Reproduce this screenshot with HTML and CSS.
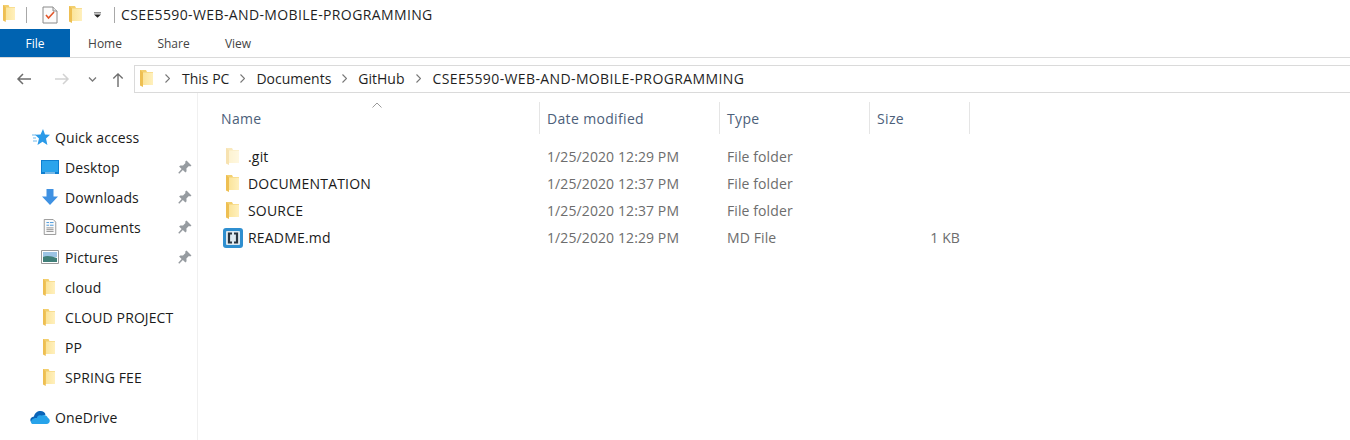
FILE: index.html
```html
<!DOCTYPE html>
<html lang="en">
<head>
<meta charset="utf-8">
<title>CSEE5590-WEB-AND-MOBILE-PROGRAMMING</title>
<link rel="stylesheet" href="styles.css">
</head>
<body>
<svg class="defs" width="0" height="0" aria-hidden="true">
  <defs>
    <linearGradient id="folderBody" x1="0" x2="1" y1="0" y2="0">
      <stop offset="0" stop-color="#fbe49a"/>
      <stop offset="1" stop-color="#fff0bd"/>
    </linearGradient>
    <symbol id="folder" viewBox="0 0 13 17" preserveAspectRatio="none">
      <path d="M0 0h6l1 2h6V15H0z" fill="#f3cf6e"/>
      <path d="M3 2.500h10V15H3z" fill="url(#folderBody)"/>
      <path d="M0 0l3 2.500V17l-3-1.500z" fill="#eebf52"/>
    </symbol>
    <symbol id="pin" viewBox="0 0 14 14">
      <path d="M8.500.500l5 5-1.300.9-1.300-.4-2.500 2.500.2 2.700-1.200 1.200-2.500-2.500L1.200 13.700.3 12.800l3.300-3.700-2.500-2.500 1.200-1.200 2.700.2 2.500-2.500-.4-1.300z" fill="#969ba0"/>
    </symbol>
  </defs>
</svg>

<header class="titlebar">
  <svg class="ico-folder qa-first" aria-hidden="true"><use href="#folder"/></svg>
  <span class="sep sep-a"></span>
  <svg class="ico-check" viewBox="0 0 16 18" aria-hidden="true">
    <path d="M1 1h10l4 4v12H1z" fill="#fbfbfb" stroke="#8a8a8a"/>
    <path d="M11 1v4h4" fill="#e8e8e8" stroke="#8a8a8a"/>
    <path d="M4 9l2.500 3L12 6" fill="none" stroke="#e2562a" stroke-width="1.600"/>
  </svg>
  <svg class="ico-folder qa-third" aria-hidden="true"><use href="#folder"/></svg>
  <svg class="ico-drop" viewBox="0 0 8 6" aria-hidden="true">
    <path d="M0 0h8v1H0zM0 2.500h8L4 6z" fill="#222"/>
  </svg>
  <span class="sep sep-b"></span>
  <span class="title">CSEE5590-WEB-AND-MOBILE-PROGRAMMING</span>
</header>

<nav class="tabs">
  <span class="tab tab-file">File</span>
  <span class="tab tab-home">Home</span>
  <span class="tab tab-share">Share</span>
  <span class="tab tab-view">View</span>
</nav>

<section class="addressrow">
  <svg class="nav-arrow nav-back" viewBox="0 0 16 12" aria-hidden="true"><path d="M15 6H2M7 1L2 6l5 5" fill="none" stroke="#6d6d6d" stroke-width="1.500"/></svg>
  <svg class="nav-arrow nav-fwd" viewBox="0 0 16 12" aria-hidden="true"><path d="M1 6h13M9 1l5 5-5 5" fill="none" stroke="#d2d2d2" stroke-width="1.500"/></svg>
  <svg class="nav-down" viewBox="0 0 8 5" aria-hidden="true"><path d="M.5.500L4 4 7.500.500" fill="none" stroke="#7a7a7a" stroke-width="1.300"/></svg>
  <svg class="nav-up" viewBox="0 0 12 16" aria-hidden="true"><path d="M6 16V2M1 7l5-5 5 5" fill="none" stroke="#6d6d6d" stroke-width="1.500"/></svg>
  <div class="addressbar">
    <svg class="ico-folder addr-folder" aria-hidden="true"><use href="#folder"/></svg>
    <svg class="crumb-sep crumb-first" viewBox="0 0 5 9" aria-hidden="true"><path d="M.5.500l4 4-4 4" fill="none" stroke="#777" stroke-width="1.100"/></svg>
    <span class="crumb">This PC</span>
    <svg class="crumb-sep" viewBox="0 0 5 9" aria-hidden="true"><path d="M.5.500l4 4-4 4" fill="none" stroke="#777" stroke-width="1.100"/></svg>
    <span class="crumb">Documents</span>
    <svg class="crumb-sep" viewBox="0 0 5 9" aria-hidden="true"><path d="M.5.500l4 4-4 4" fill="none" stroke="#777" stroke-width="1.100"/></svg>
    <span class="crumb">GitHub</span>
    <svg class="crumb-sep crumb-last" viewBox="0 0 5 9" aria-hidden="true"><path d="M.5.500l4 4-4 4" fill="none" stroke="#777" stroke-width="1.100"/></svg>
    <span class="crumb crumb-long">CSEE5590-WEB-AND-MOBILE-PROGRAMMING</span>
  </div>
</section>

<div class="explorer">
  <aside class="sidebar">
    <div class="side-row top">
      <svg class="side-ico star" viewBox="0 0 18 17" aria-hidden="true">
        <path d="M11 0l2 5.500 5 .300-4 3.700 1.400 6.500-4.900-3.300-5 3.300 1.500-6.500-4-3.700 5.500-.300z" fill="#2a9ae8"/>
        <path d="M0 6h4M1 9h3M1 12h4" stroke="#6fb9ec" stroke-width="1"/>
      </svg>
      <span>Quick access</span>
    </div>
    <div class="side-row sub">
      <svg class="side-ico wide" viewBox="0 0 18 14" aria-hidden="true">
        <path d="M0 0h18v14H0z" fill="#0f7fd0"/><path d="M1 1h16v11H1z" fill="#2ba4ec"/><path d="M4 12.500h10v1H4z" fill="#dff1fc"/>
      </svg>
      <span class="side-label">Desktop</span>
      <svg class="pin" aria-hidden="true"><use href="#pin"/></svg>
    </div>
    <div class="side-row sub">
      <svg class="side-ico wide" viewBox="0 0 18 16" aria-hidden="true">
        <path d="M5.500 0h7v7.500H17L9 16 1 7.500h4.500z" fill="#3f91e2"/>
      </svg>
      <span class="side-label">Downloads</span>
      <svg class="pin" aria-hidden="true"><use href="#pin"/></svg>
    </div>
    <div class="side-row sub">
      <svg class="side-ico wide" viewBox="0 0 18 18" aria-hidden="true">
        <path d="M2.500.500h10l3 3v14h-13z" fill="#fafafa" stroke="#8d8d8d"/>
        <path d="M5 4h3M5 7h3M9 4h4M9 7h4" stroke="#3a8fd8"/>
        <path d="M5 10h8M5 12h8M5 14h8" stroke="#8a8a8a"/>
      </svg>
      <span class="side-label">Documents</span>
      <svg class="pin" aria-hidden="true"><use href="#pin"/></svg>
    </div>
    <div class="side-row sub">
      <svg class="side-ico wide" viewBox="0 0 18 14" aria-hidden="true">
        <path d="M.5.500h17v13H.5z" fill="#fff" stroke="#9a9a9a"/>
        <path d="M2 2h14v5H2z" fill="#9cc4e4"/>
        <path d="M2 7c4-2 8-1 14 1v4H2z" fill="#3f7f78"/>
      </svg>
      <span class="side-label">Pictures</span>
      <svg class="pin" aria-hidden="true"><use href="#pin"/></svg>
    </div>
    <div class="side-row sub">
      <svg class="ico-folder side-folder" aria-hidden="true"><use href="#folder"/></svg>
      <span class="side-label">cloud</span>
    </div>
    <div class="side-row sub">
      <svg class="ico-folder side-folder" aria-hidden="true"><use href="#folder"/></svg>
      <span class="side-label">CLOUD PROJECT</span>
    </div>
    <div class="side-row sub">
      <svg class="ico-folder side-folder" aria-hidden="true"><use href="#folder"/></svg>
      <span class="side-label">PP</span>
    </div>
    <div class="side-row sub">
      <svg class="ico-folder side-folder" aria-hidden="true"><use href="#folder"/></svg>
      <span class="side-label">SPRING FEE</span>
    </div>
    <div class="side-row top onedrive">
      <svg class="side-ico cloud" viewBox="0 0 20 13" aria-hidden="true">
        <path d="M4 5.500C4.500 2 7.500 0 10.500 0c2.500 0 4.500 1.500 5 3.500L10 8 1 11C-.500 9 .500 6 4 5.500z" fill="#0a64b8"/>
        <path d="M3 13h13.500c3.500 0 4.500-4.500 1.500-6-1-2.500-4-4-6.500-2.500C9 3.500 7 5 7 7 3 6.500.500 9.500 1 11.500c.500 1 1 1.500 2 1.500z" fill="#27a3ea"/>
      </svg>
      <span>OneDrive</span>
    </div>
  </aside>

  <main class="files">
    <svg class="sort-caret" viewBox="0 0 10 6" aria-hidden="true"><path d="M.5 5.500L5 1l4.500 4.500" fill="none" stroke="#9a9a9a"/></svg>
    <div class="file-grid head">
      <span class="col col-name">Name</span>
      <span class="col col-rule">Date modified</span>
      <span class="col col-rule">Type</span>
      <span class="col col-rule">Size</span>
      <span class="col-end"></span>
    </div>
    <div class="file-grid row">
      <span class="cell-name"><svg class="ico-folder file-folder git" aria-hidden="true"><use href="#folder"/></svg><span>.git</span></span>
      <span class="cell">1/25/2020 12:29 PM</span>
      <span class="cell">File folder</span>
      <span class="cell"></span>
    </div>
    <div class="file-grid row">
      <span class="cell-name"><svg class="ico-folder file-folder" aria-hidden="true"><use href="#folder"/></svg><span>DOCUMENTATION</span></span>
      <span class="cell">1/25/2020 12:37 PM</span>
      <span class="cell">File folder</span>
      <span class="cell"></span>
    </div>
    <div class="file-grid row">
      <span class="cell-name"><svg class="ico-folder file-folder" aria-hidden="true"><use href="#folder"/></svg><span>SOURCE</span></span>
      <span class="cell">1/25/2020 12:37 PM</span>
      <span class="cell">File folder</span>
      <span class="cell"></span>
    </div>
    <div class="file-grid row">
      <span class="cell-name"><svg class="md-ico" viewBox="0 0 20 20" aria-hidden="true">
        <rect width="20" height="20" rx="3" fill="#2f8fd0"/>
        <rect x="3" y="3" width="14" height="14" rx="1" fill="#dfe9f0"/>
        <path d="M9 5.500H6v9h3M11 5.500h3v9h-3" fill="none" stroke="#2a3540" stroke-width="2.200"/>
      </svg><span>README.md</span></span>
      <span class="cell">1/25/2020 12:29 PM</span>
      <span class="cell">MD File</span>
      <span class="cell cell-size">1 KB</span>
    </div>
  </main>
</div>
</body>
</html>
```

FILE: styles.css
```css
* { box-sizing: border-box; }

html, body {
  margin: 0;
  padding: 0;
  width: 1350px;
  height: 440px;
  overflow: hidden;
  background: #fff;
}

body {
  font-family: "Open Sans", "Noto Sans", "Liberation Sans", sans-serif;
  font-size: 14px;
  color: #1a1a1a;
}

.defs { display: block; height: 0; }

.ico-folder { display: block; width: 13px; height: 17px; flex: none; }

/* title bar */
.titlebar {
  height: 29px;
  display: flex;
  align-items: center;
}
.qa-first { margin-left: 3px; width: 12px; margin-top: -2px; }
.sep { width: 1px; height: 16px; background: #a8a8a8; flex: none; }
.sep-a { margin-left: 11px; }
.ico-check { width: 16px; height: 18px; margin-left: 15px; flex: none; }
.qa-third { margin-left: 11px; }
.ico-drop { width: 7px; height: 6px; margin-left: 12px; flex: none; }
.sep-b { margin-left: 13px; }
.title { margin-left: 6px; font-size: 14px; letter-spacing: 0.38px; color: #1f1f1f; white-space: nowrap; }

/* ribbon tabs */
.tabs {
  height: 29px;
  display: flex;
  border-bottom: 1px solid #dadada;
}
.tab { height: 28px; line-height: 30px; font-size: 12px; color: #444; text-align: center; }
.tab-file { width: 70px; background: #0063b1; color: #fff; }
.tab-home { width: 70px; }
.tab-share { width: 35px; margin-left: 16px; }
.tab-view { width: 30px; margin-left: 32px; }

/* address row */
.addressrow {
  height: 28px;
  margin-top: 7px;
  display: flex;
  align-items: center;
}
.nav-arrow { width: 16px; height: 12px; flex: none; }
.nav-back { margin-left: 16px; }
.nav-fwd { margin-left: 22px; }
.nav-down { width: 9px; height: 5px; margin-left: 18px; flex: none; }
.nav-up { width: 12px; height: 15px; margin-left: 15px; flex: none; }
.addressbar {
  margin-left: 10px;
  flex: 1;
  height: 28px;
  display: flex;
  align-items: center;
  padding-bottom: 1px;
  border: 1px solid #dadada;
  border-right: none;
}
.addr-folder { margin-left: 5px; }
.crumb-sep { width: 5px; height: 9px; flex: none; margin: 0 11px; }
.crumb-first { margin-left: 12px; margin-right: 12px; }
.crumb-last { margin-right: 12px; }
.crumb { font-size: 14px; color: #1f1f1f; white-space: nowrap; }
.crumb-long { letter-spacing: 0.38px; }

/* body */
.explorer { display: flex; height: 347px; }

.sidebar {
  width: 198px;
  flex: none;
  padding-top: 29px;
  border-right: 1px solid #f0f0f0;
}
.side-row {
  height: 30px;
  display: flex;
  align-items: center;
  font-size: 14px;
  letter-spacing: 0.1px;
  color: #1a1a1a;
}
.side-row.top { padding-left: 32px; }
.side-row.sub { padding-left: 41px; }
.side-row.onedrive { margin-top: 10px; padding-left: 30px; }
.side-ico { flex: none; display: block; }
.star { width: 18px; height: 17px; margin-right: 5px; }
.cloud { width: 20px; height: 13px; margin-right: 5px; }
.wide { width: 18px; height: 16px; margin-right: 6px; }
.side-folder { margin: 0 10px 0 2px; width: 12px; }
.side-label { flex: 1; }
.pin { width: 14px; height: 14px; flex: none; margin-right: 5px; }

/* file list */
.files { position: relative; flex: 1; padding-top: 9px; }
.sort-caret { position: absolute; left: 174px; top: 9px; width: 10px; height: 6px; }

.file-grid {
  display: grid;
  grid-template-columns: 341px 180px 150px 100px 1px;
}
.head { height: 32px; margin-bottom: 9px; align-items: stretch; }
.col {
  display: flex;
  align-items: center;
  padding-left: 7px;
  font-size: 14px;
  letter-spacing: 0.34px;
  color: #4c607a;
}
.col-name { padding-left: 23px; }
.col-rule { border-left: 1px solid #e5e5e5; }
.col-end { background: #e5e5e5; }

.row { height: 27px; align-items: center; font-size: 14px; letter-spacing: 0.1px; }
.cell { padding-left: 8px; color: #6d6d6d; white-space: nowrap; }
.cell-name { display: flex; align-items: center; padding-left: 28px; color: #1a1a1a; letter-spacing: 0.18px; }
.file-folder { margin-right: 9px; }
.file-folder.git { opacity: 0.45; }
.md-ico { width: 20px; height: 20px; flex: none; margin: 0 5px 0 -3px; display: block; }
.cell-size { text-align: right; padding-right: 9px; }
```
